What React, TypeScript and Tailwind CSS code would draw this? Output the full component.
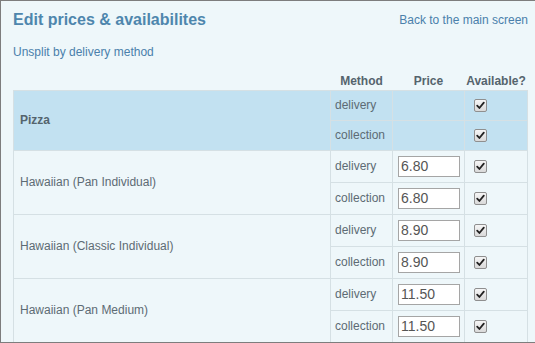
import React from "react";

function Check() {
  return (
    <span className="inline-flex items-center justify-center w-[13px] h-[13px] border border-[#8f8f8f] rounded-[2px] bg-gradient-to-b from-[#f6f6f6] to-[#d9d9d9] align-middle">
      <svg width="9" height="9" viewBox="0 0 9 9">
        <path d="M1.2 4.6 L3.4 7 L7.8 1.6" stroke="#222" strokeWidth="1.8" fill="none" strokeLinecap="round" strokeLinejoin="round" />
      </svg>
    </span>
  );
}

type Row = { name: string; group?: boolean; prices?: [string, string] };

const rows: Row[] = [
  { name: "Pizza", group: true },
  { name: "Hawaiian (Pan Individual)", prices: ["6.80", "6.80"] },
  { name: "Hawaiian (Classic Individual)", prices: ["8.90", "8.90"] },
  { name: "Hawaiian (Pan Medium)", prices: ["11.50", "11.50"] },
];

export default function App() {
  return (
    <div
      className="w-[535px] h-[343px] overflow-hidden bg-[#eef7fa] border-l border-t border-b border-[#7d7d7d] text-[12px] text-[#5d6b74]"
      style={{ fontFamily: '"Liberation Sans", Arial, sans-serif' }}
    >
      <div className="pl-[12px] pr-[7px] pt-[9px]">
        <div className="flex items-start justify-between">
          <h1 className="text-[16px] font-bold text-[#4e86ad] leading-[20px]">Edit prices &amp; availabilites</h1>
          <a className="text-[#4a80ab] mt-[3px] leading-[14px]">Back to the main screen</a>
        </div>
        <div className="mt-[15px] text-[#4a80ab] leading-[14px]">Unsplit by delivery method</div>
        <table className="mt-[13px] w-[515px] border-collapse">
          <thead>
            <tr className="h-[18px]">
              <th></th>
              <th className="w-[62px] font-bold text-[#55646d] text-center align-bottom pb-[2px] leading-[14px]">Method</th>
              <th className="w-[72px] font-bold text-[#55646d] text-center align-bottom pb-[2px] leading-[14px]">Price</th>
              <th className="w-[63px] font-bold text-[#55646d] text-center align-bottom pb-[2px] leading-[14px]">Available?</th>
            </tr>
          </thead>
          <tbody>
            {rows.map((r) =>
              ["delivery", "collection"].map((m, i) => (
                <tr
                  key={r.name + m}
                  className={r.group ? "h-[30px] bg-[#c2e1f1]" : "h-[32px]"}
                >
                  {i === 0 && (
                    <td
                      rowSpan={2}
                      className={
                        "border border-[#d5e0e4] pl-[6px] " +
                        (r.group ? "font-bold text-[#54646d]" : "")
                      }
                    >
                      {r.name}
                    </td>
                  )}
                  <td className="border border-[#d5e0e4] pl-[4px]">{m}</td>
                  <td className="border border-[#d5e0e4] pl-[5px]">
                    {r.prices && (
                      <input
                        readOnly
                        value={r.prices[i]}
                        className="block w-[62px] h-[21px] bg-white border border-[#a5a5a5] px-[2px] text-[14px] text-[#555] outline-none"
                        style={{ fontFamily: '"Liberation Sans", Arial, sans-serif' }}
                      />
                    )}
                  </td>
                  <td className="border border-[#d5e0e4] pl-[9px]">
                    <Check />
                  </td>
                </tr>
              ))
            )}
          </tbody>
        </table>
      </div>
    </div>
  );
}
